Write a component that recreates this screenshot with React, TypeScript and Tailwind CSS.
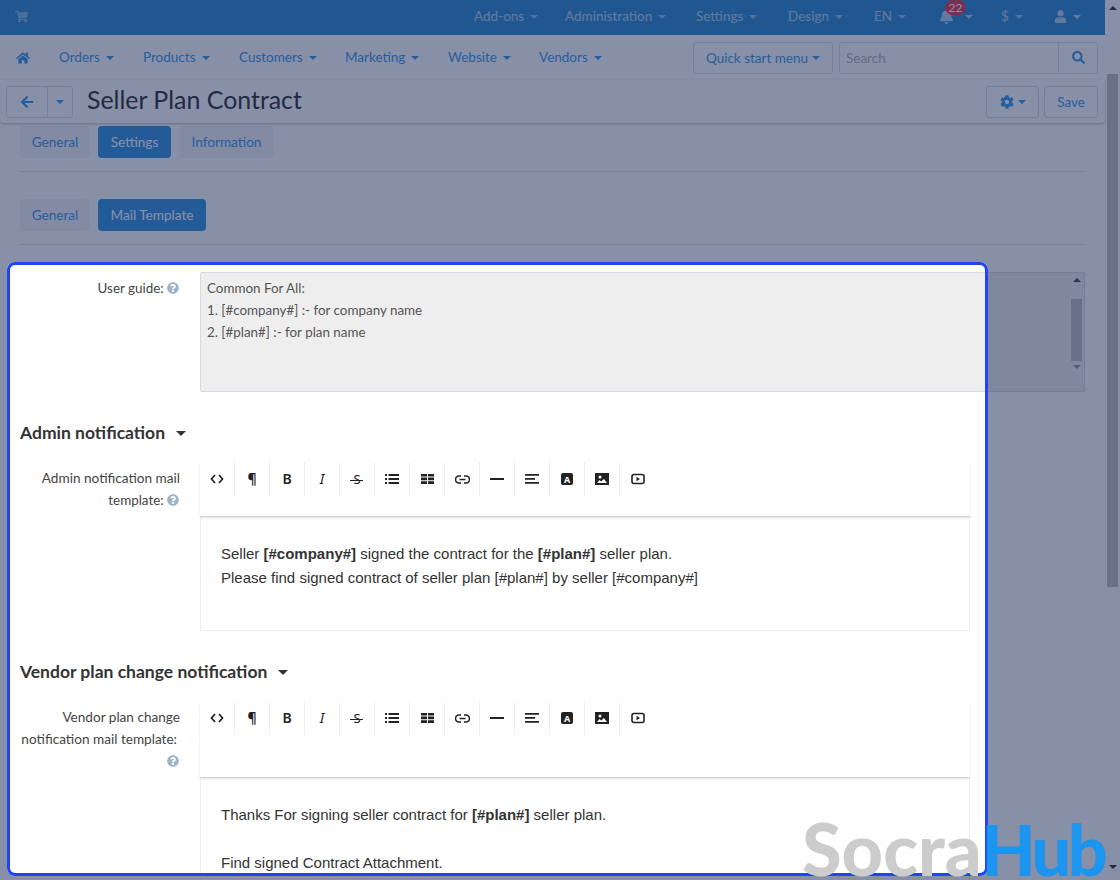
import React from "react";
import { FaShoppingCart, FaHome, FaArrowLeft, FaCog, FaSearch, FaBell, FaUser, FaQuestionCircle } from "react-icons/fa";

function Caret({ className = "" }: { className?: string }) {
  return <span className={`inline-block w-0 h-0 border-x-[4.5px] border-x-transparent border-t-[4.5px] ${className}`} />;
}

function TopItem({ label, className }: { label: string; className: string }) {
  return (
    <span className={`flex items-center gap-[6px] ${className}`}>
      {label}
      <Caret className="border-t-[#ffffff] opacity-80" />
    </span>
  );
}

function NavItem({ label, className }: { label: string; className: string }) {
  return (
    <span className={`flex items-center gap-[6px] ${className}`}>
      {label}
      <Caret className="border-t-[#3a9ae6]" />
    </span>
  );
}

function Tab({ label, active, className = "" }: { label: string; active?: boolean; className?: string }) {
  return (
    <span className={`h-8 pt-[1px] flex items-center justify-center rounded-[4px] text-[13.6px] ${active ? "bg-[#3592de] text-white" : "bg-[#f3f3f6] text-[#3a9ae6]"} ${className}`}>
      {label}
    </span>
  );
}

function ToolIcon({ i }: { i: number }) {
  const c = "#222";
  switch (i) {
    case 0:
      return (
        <svg width="14" height="10" viewBox="0 0 14 10" fill="none" stroke={c} strokeWidth="1.7">
          <path d="M5 1 1.500 5 5 9M9 1l3.500 4L9 9" />
        </svg>
      );
    case 1:
      return <span className="text-[14px] font-bold leading-none text-[#222] font-['Noto_Sans',sans-serif]">¶</span>;
    case 2:
      return <span className="text-[14px] font-semibold leading-none text-[#222] font-['Noto_Sans',sans-serif]">B</span>;
    case 3:
      return <span className="text-[14px] italic leading-none text-[#222] font-['Noto_Sans',sans-serif]">I</span>;
    case 4:
      return (
        <span className="relative text-[13px] leading-none text-[#222] font-['Noto_Sans',sans-serif]">
          S
          <span className="absolute left-[-3px] top-[7px] w-[13px] h-[1px] bg-[#222]" />
        </span>
      );
    case 5:
      return (
        <svg width="14" height="10" viewBox="0 0 14 10" fill={c}>
          <path d="M0 0h2v2H0zM3.500 0H14v2H3.500zM0 4h2v2H0zM3.500 4H14v2H3.500zM0 8h2v2H0zM3.500 8H14v2H3.500z" />
        </svg>
      );
    case 6:
      return (
        <svg width="13" height="10" viewBox="0 0 13 10" fill={c}>
          <path d="M0 0h6v2.500H0zM7 0h6v2.500H7zM0 3.500h6v2.800H0zM7 3.500h6v2.800H7zM0 7.300h6V10H0zM7 7.300h6V10H7z" />
        </svg>
      );
    case 7:
      return (
        <svg width="15" height="9" viewBox="0 0 15 9" fill="none" stroke={c} strokeWidth="1.6">
          <path d="M6 1H4a3.500 3.500 0 0 0 0 7h2M9 1h2a3.500 3.500 0 0 1 0 7H9M4.500 4.500h6" />
        </svg>
      );
    case 8:
      return <span className="block w-[14px] h-[2px] bg-[#222]" />;
    case 9:
      return (
        <svg width="14" height="10" viewBox="0 0 14 10" fill={c}>
          <path d="M0 0h14v1.700H0zM0 4h10v1.700H0zM0 8h14v1.700H0z" />
        </svg>
      );
    case 10:
      return (
        <span className="w-3 h-3 rounded-[2px] bg-[#222] flex items-center justify-center text-[9px] font-bold leading-none text-white font-['Noto_Sans',sans-serif]">A</span>
      );
    case 11:
      return (
        <svg width="14" height="12" viewBox="0 0 14 12">
          <path fill={c} d="M0 0h14v12H0z" />
          <circle cx="5" cy="4" r="1.500" fill="#fff" />
          <path fill="#fff" d="m2 10 2.500-3 1.500 1.500L9 6l3 4z" />
        </svg>
      );
    default:
      return (
        <svg width="14" height="12" viewBox="0 0 14 12" fill="none">
          <rect x="1" y="1.500" width="12" height="9" rx="2" stroke={c} strokeWidth="1.600" />
          <path fill={c} d="M5.500 3.800v4.400L9 6z" />
        </svg>
      );
  }
}

function Toolbar({ className }: { className: string }) {
  return (
    <div className={`border-b border-b-[#d0d0d0] shadow-[0_1px_2px_rgba(0,0,0,0.12)] flex items-start ${className}`}>
      {Array.from({ length: 13 }).map((_, i) => (
        <span key={i} className={`w-[35px] h-[34px] flex items-center justify-center ${i < 12 ? "border-r border-r-[#efefef]" : ""}`}>
          <ToolIcon i={i} />
        </span>
      ))}
    </div>
  );
}

function Hint() {
  return <FaQuestionCircle className="inline-block text-[12px] text-[#9db3c6] align-[-1px]" />;
}

export default function App() {
  return (
    <div className="relative w-[1120px] h-[880px] overflow-hidden bg-white flex text-[13.400px] font-['Lato','Noto_Sans',sans-serif] text-[#444]">
      <div className="w-[1105px] h-full flex flex-col">
        <header className="h-[35px] shrink-0 bg-[#318dd1] text-white flex items-center pl-[15px] pr-[24px] pb-[2px]">
          <FaShoppingCart className="text-[13px] opacity-40" />
          <div className="ml-auto flex items-center opacity-60 text-[13.500px]">
            <TopItem label="Add-ons" className="w-[91px]" />
            <TopItem label="Administration" className="w-[131px]" />
            <TopItem label="Settings" className="w-[92px]" />
            <TopItem label="Design" className="w-[86px]" />
            <TopItem label="EN" className="w-[65px]" />
            <span className="relative w-[62px] flex items-center gap-[11px]">
              <FaBell className="text-[15px]" />
              <Caret className="border-t-white" />
            </span>
            <TopItem label="$" className="w-[53px]" />
            <span className="flex items-center gap-[6px]">
              <FaUser className="text-[13px]" />
              <Caret className="border-t-white" />
            </span>
          </div>
        </header>
        <nav className="h-[45px] shrink-0 flex items-center pl-[16px] pr-[7px] bg-white text-[#3a9ae6] text-[13.500px]">
          <FaHome className="text-[14px] mr-[29px]" />
          <NavItem label="Orders" className="w-[84px]" />
          <NavItem label="Products" className="w-[96px]" />
          <NavItem label="Customers" className="w-[106px]" />
          <NavItem label="Marketing" className="w-[103px]" />
          <NavItem label="Website" className="w-[91px]" />
          <NavItem label="Vendors" className="w-[90px]" />
          <span className="ml-auto w-[140px] h-8 pt-[1px] border border-[#d8dde8] rounded-[3px] flex items-center justify-center gap-[4px]">
            Quick start menu
            <Caret className="border-t-[#3a9ae6]" />
          </span>
          <span className="ml-[6px] w-[259px] h-8 border border-[#d8dde8] rounded-[3px] flex items-center">
            <span className="flex-1 pl-[6px] pt-[1px] text-[#b0b3bb]">Search</span>
            <span className="w-[39px] h-full border-l border-l-[#d8dde8] flex items-center justify-center">
              <FaSearch className="text-[13px]" />
            </span>
          </span>
        </nav>
        <div className="h-[43px] shrink-0 bg-[#fefefe] shadow-[0_1px_3px_rgba(0,0,0,0.25)] rounded-b-[4px] flex items-center pl-[6px] pr-[7px] relative z-10">
          <span className="w-[67px] h-8 border border-[#d8dde8] rounded-[3px] flex items-center text-[#3a9ae6]">
            <span className="w-[41px] h-full border-r border-r-[#d8dde8] flex items-center justify-center">
              <FaArrowLeft className="text-[14px]" />
            </span>
            <span className="flex-1 flex items-center justify-center">
              <Caret className="border-t-[#3a9ae6]" />
            </span>
          </span>
          <h1 className="ml-[14px] -mt-[5px] text-[24.900px] leading-none text-[#333]">Seller Plan Contract</h1>
          <span className="ml-auto w-[53px] h-8 border border-[#d8dde8] rounded-[3px] flex items-center justify-center gap-[4px] text-[#3a9ae6]">
            <FaCog className="text-[14px]" />
            <Caret className="border-t-[#3a9ae6]" />
          </span>
          <span className="ml-[5px] w-[54px] h-8 pt-[1px] border border-[#d8dde8] rounded-[3px] flex items-center justify-center text-[#3a9ae6]">Save</span>
        </div>
        <main className="flex-1 min-h-0 pl-[20px] pr-[20px] pt-[3px]">
          <div className="flex gap-2 pb-[13px] border-b border-b-[#dde2ec]">
            <Tab label="General" className="w-[70px]" />
            <Tab label="Settings" active className="w-[73px]" />
            <Tab label="Information" className="w-[95px]" />
          </div>
          <div className="flex gap-2 mt-[27px] pb-[13px] border-b border-b-[#dde2ec]">
            <Tab label="General" className="w-[70px]" />
            <Tab label="Mail Template" active className="w-[108px]" />
          </div>
          <div className="flex mt-[27px]">
            <div className="w-[160px] text-right pt-[5px] leading-[22px] mr-[20px] pr-[1px]">
              User guide: <Hint />
            </div>
            <div className="w-[885px] h-[120px] flex bg-[#eeeeee] border border-[#d5dbe3] rounded-[2px]">
              <div className="flex-1 pl-[6px] pt-[4px] leading-[22px] text-[#555]">
                <div>Common For All:</div>
                <div>1. [#company#] :- for company name</div>
                <div>2. [#plan#] :- for plan name</div>
              </div>
              <div className="w-[15px] flex flex-col items-center py-[5px]">
                <Caret className="rotate-180 border-t-[#444]" />
                <span className="w-[11px] h-[62px] mt-[17px] bg-[#c1c1c1]" />
                <Caret className="mt-[4px] border-t-[#999]" />
              </div>
            </div>
          </div>
          <h2 className="mt-[30px] text-[17.500px] leading-[22px] font-bold text-[#333] flex items-center gap-[11px]">
            Admin notification
            <Caret className="border-x-[5px] border-t-[5px] border-t-[#333]" />
          </h2>
          <div className="flex mt-[18px]">
            <div className="w-[160px] text-right pt-[5px] leading-[22px] mr-[20px]">
              <span className="text-[13.600px]">Admin notification mail</span>
              <br />
              <span className="pr-[1px]">template: <Hint /></span>
            </div>
            <div className="w-[770px]">
              <Toolbar className="h-[55px]" />
              <div className="h-[114px] border border-[#eeeeee] pl-[20px] pt-[24px] text-[15px] leading-[24px] text-[#333] font-['Liberation_Sans',sans-serif]">
                <div>
                  Seller <b>[#company#]</b> signed the contract for the <b>[#plan#]</b> seller plan.
                </div>
                <div>Please find signed contract of seller plan [#plan#] by seller [#company#]</div>
              </div>
            </div>
          </div>
          <h2 className="mt-[30px] text-[17.500px] leading-[22px] font-bold text-[#333] flex items-center gap-[11px]">
            Vendor plan change notification
            <Caret className="border-x-[5px] border-t-[5px] border-t-[#333]" />
          </h2>
          <div className="flex mt-[18px]">
            <div className="w-[160px] text-right pt-[5px] leading-[22px] mr-[20px]">
              <span className="text-[13.600px]">Vendor plan change</span>
              <br />
              <span className="pr-[3px] text-[13.600px]">notification mail template:</span>
              <br />
              <span className="pr-[1px]"><Hint /></span>
            </div>
            <div className="w-[770px]">
              <Toolbar className="h-[77px]" />
              <div className="h-[200px] border border-[#eeeeee] pl-[20px] pt-[24px] text-[15px] leading-[24px] text-[#333] font-['Liberation_Sans',sans-serif]">
                <div>
                  Thanks For signing seller contract for <b>[#plan#]</b> seller plan.
                </div>
                <div className="mt-[24px]">Find signed Contract Attachment.</div>
              </div>
            </div>
          </div>
        </main>
      </div>
      <aside className="w-[15px] h-full bg-[#ffffff] flex flex-col items-center pt-[6px]">
        <Caret className="rotate-180 border-t-[#333]" />
        <span className="w-[11px] h-[513px] mt-[64px] bg-[#c1c1c1]" />
        <span className="mt-auto mb-[6px]">
          <Caret className="border-t-[#333]" />
        </span>
      </aside>
      <span className="absolute z-10 left-[945px] top-0 h-[15px] w-[21px] text-center rounded-full bg-[#e03f50] text-white text-[12px] leading-[15px]">22</span>
      <div className="absolute z-20 left-[7px] top-[262px] w-[981px] h-[614px] border-[3px] border-[#1f45f5] rounded-[8px] shadow-[0_0_0_1200px_rgba(17,33,81,0.5)] pointer-events-none" />
      <div className="absolute z-30 left-[802px] top-[818px] text-[72px] leading-[60px] font-black font-['Lato',sans-serif] whitespace-nowrap">
        <span className="text-[#cccccc]">Socra</span>
        <span className="text-[#1b95f0] text-[70px] tracking-[-3.500px]">Hub</span>
      </div>
    </div>
  );
}
